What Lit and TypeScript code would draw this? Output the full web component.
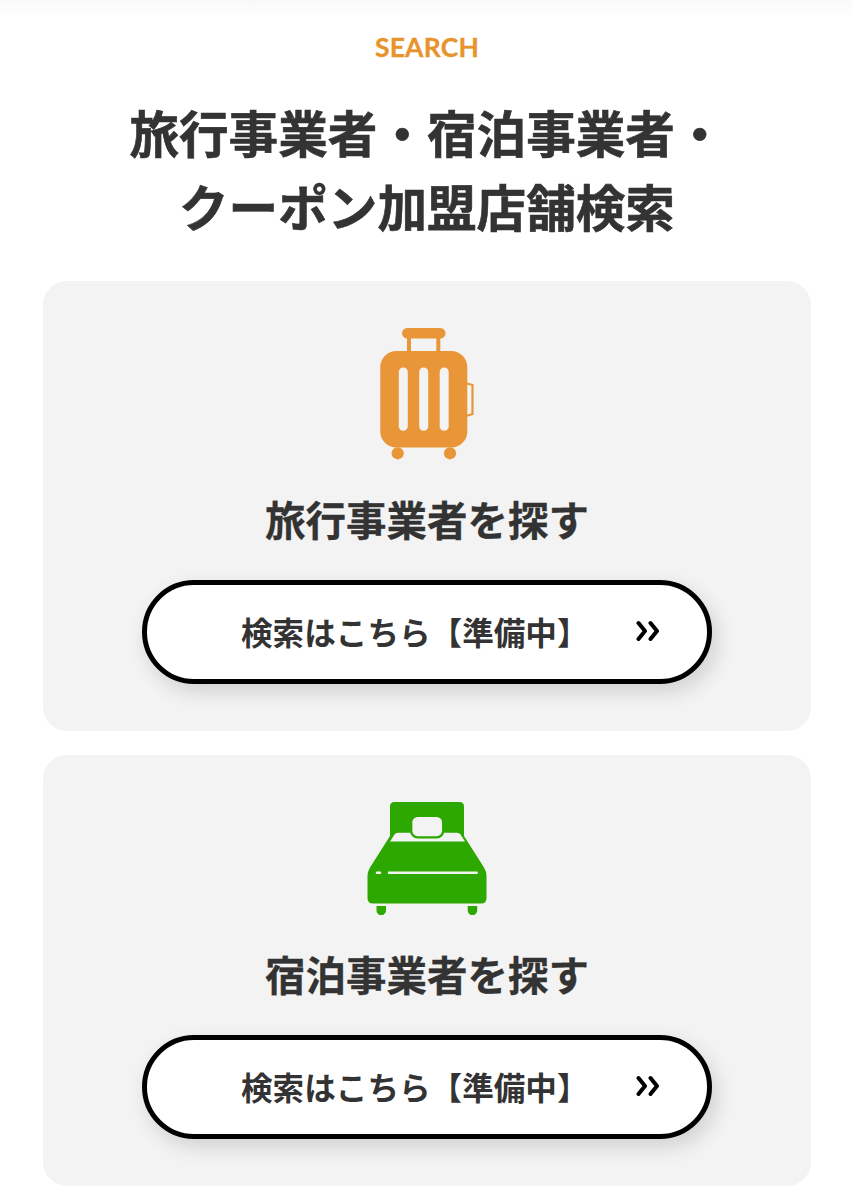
import { LitElement, html, css } from "lit";
import { customElement, property } from "lit/decorators.js";

const suitcase = html`<svg width="94" height="132" viewBox="380 328 94 132">
  <g fill="#e89638">
    <rect x="402" y="328" width="43.5" height="10.5" rx="5.2" />
    <path d="M407 336h4v16h-4zM436.3 336h4v16h-4z" />
    <rect x="380.3" y="351" width="87" height="96.5" rx="16" />
    <circle cx="397.7" cy="453.3" r="6.1" />
    <circle cx="450" cy="453.3" r="6.1" />
  </g>
  <path d="M467 383.5L472.5 385V414L467 415.7" fill="none" stroke="#e89638" stroke-width="2.2" />
  <g fill="#f3f3f3">
    <rect x="398.8" y="367.5" width="9" height="63.3" rx="4.5" />
    <rect x="419.2" y="367.5" width="9" height="63.3" rx="4.5" />
    <rect x="439.7" y="367.5" width="9" height="63.3" rx="4.5" />
  </g>
</svg>`;

const bed = html`<svg width="120" height="113" viewBox="367 802 120 113">
  <g fill="#2ca800">
    <path d="M390 836V806.5q0-4.5 4.5-4.5H459.5q4.5 0 4.5 4.500V836L484 867.5Q486.5 871.5 486.5 876V898q0 5.5-5.5 5.5H373q-5.5 0-5.5-5.5V876Q367.5 871.5 370 867.5Z" />
    <path d="M376.5 906h9.5v4.500a4.750 4.750 0 0 1-9.500 0zM467.700 906h9.500v4.500a4.750 4.750 0 0 1-9.500 0z" />
  </g>
  <path d="M390 841.5L394.5 834.5Q395.7 832.7 398 832.7H457Q459.3 832.7 460.5 834.5L465 841.5Z" fill="#f3f3f3" />
  <rect x="411.2" y="815.8" width="32" height="21.5" rx="6.5" fill="#f3f3f3" stroke="#2ca800" stroke-width="2.3" />
  <path d="M377 872.7h3M389 872.7H476.7" stroke="#f3f3f3" stroke-width="2.5" stroke-linecap="round" />
</svg>`;

@customElement("search-card")
class SearchCard extends LitElement {
  @property() heading = "";
  @property({ attribute: false }) icon: unknown = null;

  static styles = css`
    :host {
      display: flex;
      flex-direction: column;
      align-items: center;
      padding: 47px 0;
      background: #f3f3f3;
      border-radius: 24px;
    }
    svg { display: block; }
    .heading {
      margin: 29px 0 31px;
      font-size: 40.5px;
      line-height: 60px;
      font-weight: 700;
      white-space: nowrap;
      -webkit-text-stroke: 0.3px #333;
    }
    .button {
      box-sizing: border-box;
      width: 570px;
      height: 104px;
      display: flex;
      align-items: center;
      justify-content: space-between;
      padding: 0 47px 3px 94px;
      border: 5px solid #000;
      border-radius: 52px;
      background: #fff;
      box-shadow: 5px 8px 20px rgba(0, 0, 0, 0.14);
      color: #333;
      text-decoration: none;
      font-size: 31.6px;
      line-height: 48px;
      font-weight: 700;
      white-space: nowrap;
    }
  `;

  render() {
    return html`
      ${this.icon}
      <h3 class="heading">${this.heading}</h3>
      <a class="button" href="#">
        <span>検索はこちら【準備中】</span>
        <svg width="24" height="22" viewBox="0 0 24 22" fill="none" stroke="#000" stroke-width="4" stroke-linecap="round" stroke-linejoin="round">
          <path d="M2.5 3L9 11L2.5 19M14.5 3L21 11L14.500 19" />
        </svg>
      </a>
    `;
  }
}

@customElement("app-root")
class AppRoot extends LitElement {
  static styles = css`
    :host {
      display: block;
      box-sizing: border-box;
      height: 1200px;
      overflow: hidden;
      padding: 27px 41px 0 43px;
      background: linear-gradient(#f9f9f9, #fff 18px);
      color: #333;
      font-family: "Noto Sans CJK JP", sans-serif;
    }
    .label {
      height: 40px;
      line-height: 40px;
      text-align: center;
      color: #e8942d;
      font-family: Lato, sans-serif;
      font-size: 26.5px;
      font-weight: 700;
      letter-spacing: 0.2px;
      -webkit-text-stroke: 0.3px #e8942d;
    }
    .title {
      margin: 27px 0 39px;
      text-align: center;
      font-size: 49.6px;
      line-height: 74px;
      font-weight: 700;
      white-space: nowrap;
      -webkit-text-stroke: 0.6px #333;
    }
    .cards {
      display: flex;
      flex-direction: column;
      gap: 24px;
    }
  `;

  render() {
    return html`
      <div class="label">SEARCH</div>
      <h2 class="title">旅行事業者・宿泊事業者・<br />クーポン加盟店舗検索</h2>
      <div class="cards">
        <search-card .heading=${"旅行事業者を探す"} .icon=${suitcase}></search-card>
        <search-card .heading=${"宿泊事業者を探す"} .icon=${bed}></search-card>
      </div>
    `;
  }
}
